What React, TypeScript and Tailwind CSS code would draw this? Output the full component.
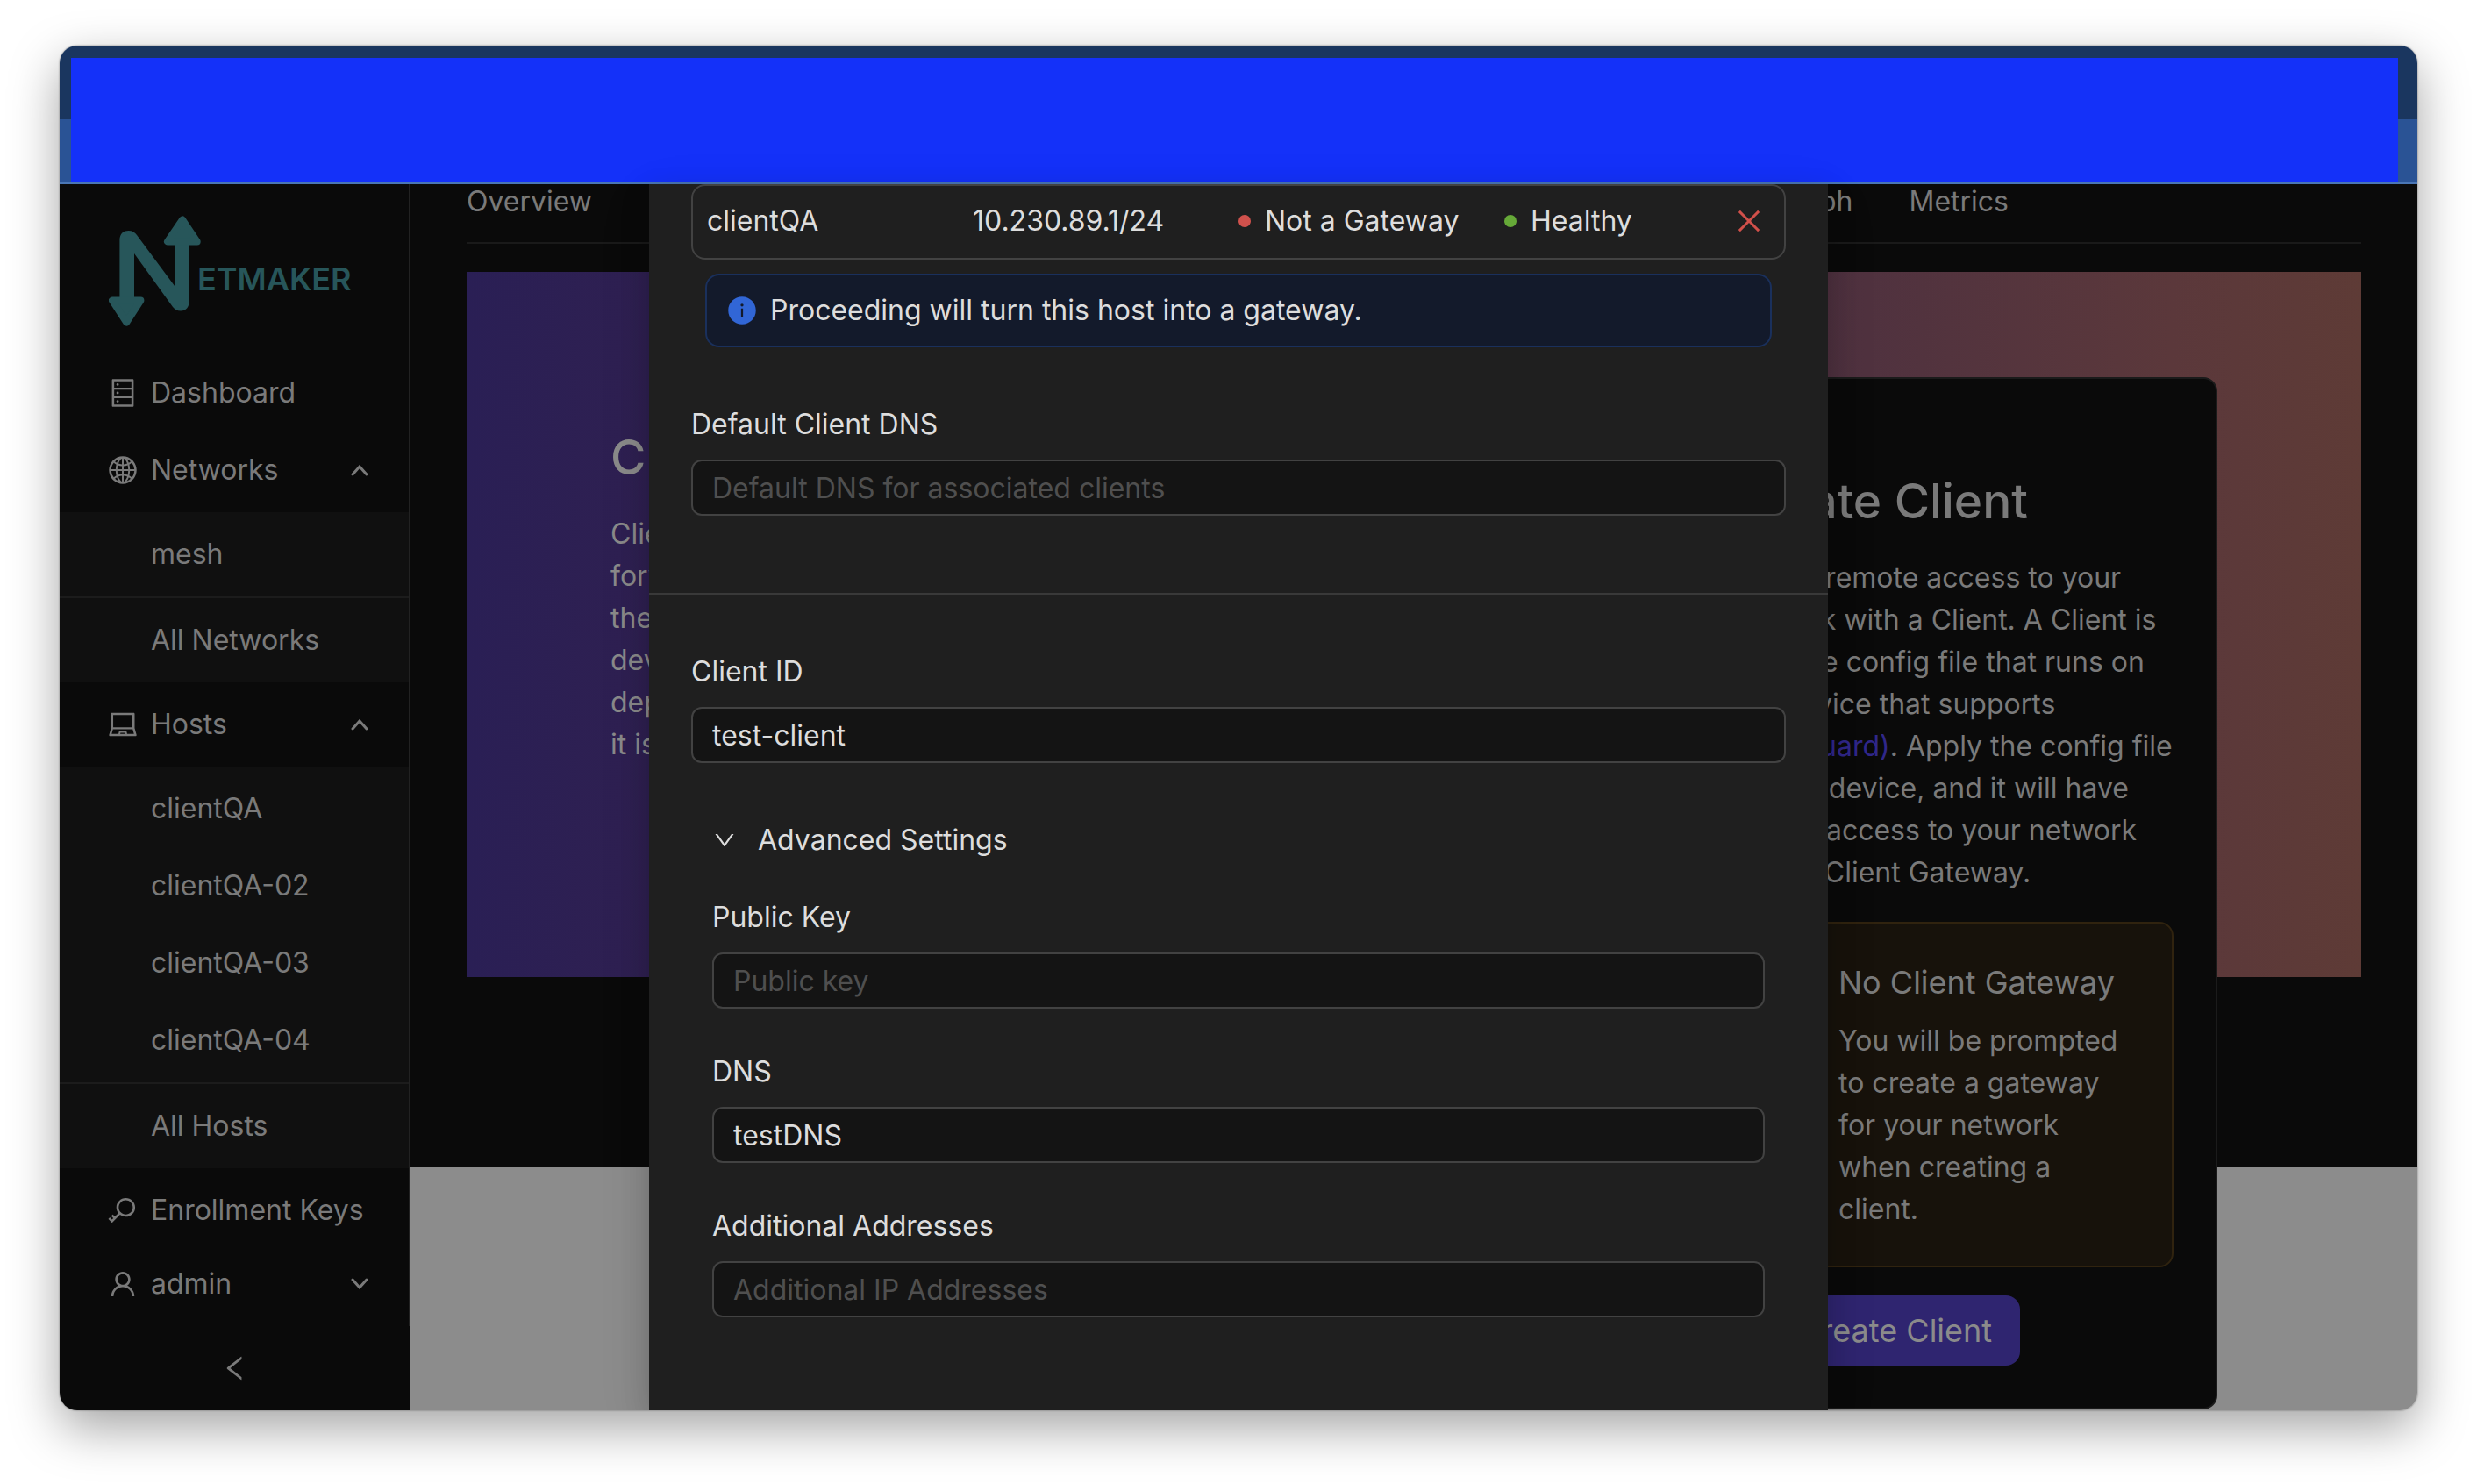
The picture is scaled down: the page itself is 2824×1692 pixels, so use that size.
import React from "react";
import type { ReactNode } from "react";
import {
  AiFillInfoCircle,
  AiOutlineClose,
  AiOutlineDatabase,
  AiOutlineDown,
  AiOutlineExclamationCircle,
  AiOutlineGlobal,
  AiOutlineKey,
  AiOutlineLaptop,
  AiOutlineLeft,
  AiOutlinePlus,
  AiOutlineUser,
} from "react-icons/ai";

function Logo() {
  return (
    <a href="#home" className="ml-14 mt-9 flex text-[#27565a]" aria-label="Netmaker">
      <svg viewBox="0 0 105 126" className="h-[126px] w-[105px] shrink-0" fill="currentColor">
        <path d="M12.4 94V28C12.4 20 17 17 22.5 17C27 17 30 19 32 22L75.8 81V31H91.8V97C91.8 104 88 108.5 82 108.5C78 108.5 75 106.5 73 104L29 43V94Z" />
        <g stroke="currentColor" strokeWidth="8" strokeLinejoin="round">
          <path d="M84 4.500L67 29.500H100.700Z" />
          <path d="M20.200 121.500L4 96.500H36.400Z" />
        </g>
      </svg>
      <span className="-ml-1 mt-12 text-[36px] font-semibold leading-[48px]">ETMAKER</span>
    </a>
  );
}

function Arrow({ up = false }: { up?: boolean }) {
  return (
    <svg viewBox="0 0 20 14" className="ml-auto h-[14px] w-5" fill="none" stroke="currentColor" strokeWidth="3" strokeLinecap="round">
      <path d={up ? "M2 12L10 3L18 12" : "M2 2L10 11L18 2"} />
    </svg>
  );
}

function NavItem({ icon, label, arrow }: { icon?: ReactNode; label: string; arrow?: "up" | "down" }) {
  return (
    <button type="button" className="flex h-20 w-full items-center gap-[14px] pl-[54px] pr-[46px] text-left">
      <span className="w-9 shrink-0 text-[36px]">{icon}</span>
      <span className="whitespace-nowrap">{label}</span>
      {arrow && <Arrow up={arrow === "up"} />}
    </button>
  );
}

function SubMenu({ items, all }: { items: string[]; all: string }) {
  return (
    <div className="bg-[#101010]">
      <div className="flex flex-col gap-2 border-b-2 border-[#1c1c1c] py-2">
        {items.map((item) => (
          <NavItem key={item} label={item} />
        ))}
      </div>
      <div className="py-2">
        <NavItem label={all} />
      </div>
    </div>
  );
}

function Sidebar() {
  return (
    <aside className="flex w-[400px] shrink-0 flex-col bg-[#0a0a0a] text-[#7a7a7a]">
      <div className="flex flex-1 flex-col border-r-2 border-[#222222] pb-2">
        <Logo />
        <nav className="mt-9 flex flex-1 flex-col justify-between">
          <div className="flex flex-col gap-2">
            <NavItem icon={<AiOutlineDatabase />} label="Dashboard" />
            <NavItem icon={<AiOutlineGlobal />} label="Networks" arrow="up" />
            <SubMenu items={["mesh"]} all="All Networks" />
            <NavItem icon={<AiOutlineLaptop />} label="Hosts" arrow="up" />
            <SubMenu items={["clientQA", "clientQA-02", "clientQA-03", "clientQA-04"]} all="All Hosts" />
            <NavItem icon={<AiOutlineKey />} label="Enrollment Keys" />
          </div>
          <NavItem icon={<AiOutlineUser />} label="admin" arrow="down" />
        </nav>
      </div>
      <button type="button" aria-label="Collapse sidebar" className="flex h-24 items-center justify-center text-[36px]">
        <AiOutlineLeft />
      </button>
    </aside>
  );
}

function Tabs() {
  return (
    <div className="flex h-[68px] justify-between border-b-2 border-[#1a1a1a] pr-[402px] leading-[40px]">
      <div className="flex items-start gap-16">
        <button type="button">Overview</button>
        <button type="button">Hosts</button>
      </div>
      <div className="flex items-start gap-16">
        <button type="button">Graph</button>
        <button type="button">Metrics</button>
      </div>
    </div>
  );
}

function CreateCard() {
  return (
    <div className="w-[608px] shrink-0 rounded-2xl border-2 border-[#1b1b1b] bg-[#0a0a0a] px-12 pb-12 pt-[103px] text-[#7a7a7a]">
      <h2 className="mb-7 text-[55px] font-medium leading-[72px]">Create Client</h2>
      <p className="whitespace-nowrap">
        Enable remote access to your
        <br />
        network with a Client. A Client is
        <br />
        a simple config file that runs on
        <br />
        any device that supports
        <br />
        <a href="#wireguard" className="text-[#30278a]">(WireGuard)</a>. Apply the config file
        <br />
        to your device, and it will have
        <br />
        secure access to your network
        <br />
        via the Client Gateway.
      </p>
      <div className="mt-8 flex gap-7 rounded-2xl border-2 border-[#30230f] bg-[#17120b] py-10 pl-12 pr-12">
        <AiOutlineExclamationCircle className="shrink-0 text-[48px] text-[#7a5a12]" />
        <div>
          <h3 className="mb-4 whitespace-nowrap text-[36px] leading-[54px]">No Client Gateway</h3>
          <p className="whitespace-nowrap">
            You will be prompted
            <br />
            to create a gateway
            <br />
            for your network
            <br />
            when creating a
            <br />
            client.
          </p>
        </div>
      </div>
      <button type="button" className="mt-8 flex h-20 items-center gap-3 rounded-2xl bg-[#2f2570] px-8 text-[36px] text-[#8b8b8b]">
        <AiOutlinePlus />
        Create Client
      </button>
    </div>
  );
}

function Main() {
  return (
    <main className="min-w-0 flex-1 bg-[#8c8c8c]">
      <div className="h-[1120px] bg-[#0a0a0a] px-16 text-[#7a7a7a]">
        <Tabs />
        <section className="mt-8 flex h-[804px] items-start justify-between bg-[linear-gradient(90deg,#2a1f55_0%,#2f2051_10%,#50323f_74%,#5b383b_90%,#5e3b36_100%)] px-[164px] pt-[120px]">
          <div className="mt-[55px] text-[#8a8a8a]">
            <h1 className="mb-7 text-[55px] font-medium leading-[72px]">Clients</h1>
            <p className="whitespace-nowrap">
              Clients allow for
              <br />
              forwarding traffic to
              <br />
              the network from
              <br />
              devices. You can
              <br />
              deploy it where
              <br />
              it is needed.
            </p>
          </div>
          <CreateCard />
        </section>
      </div>
    </main>
  );
}

type FieldProps = { id: string; label: string; placeholder?: string; value?: string };

function Field({ id, label, placeholder, value }: FieldProps) {
  return (
    <div className="flex flex-col gap-4">
      <label htmlFor={id}>{label}</label>
      <input
        id={id}
        type="text"
        placeholder={placeholder}
        defaultValue={value}
        className="h-16 w-full rounded-xl border-2 border-[#424242] bg-[#141414] px-[22px] outline-none placeholder:text-[#4f4f4f]"
      />
    </div>
  );
}

function Status({ color, label }: { color: string; label: string }) {
  return (
    <span className="flex items-center gap-4 whitespace-nowrap">
      <span className={`size-[14px] rounded-full ${color}`} />
      {label}
    </span>
  );
}

function ClientDialog() {
  return (
    <div
      role="dialog"
      aria-label="Create a client"
      className="absolute inset-y-0 left-1/2 w-1/2 -translate-x-1/2 bg-[#1f1f1f] text-[#dddddd] shadow-[0_12px_32px_rgba(0,0,0,0.16),0_18px_56px_rgba(0,0,0,0.1)]"
    >
      <div className="px-12">
        <div className="grid h-[86px] grid-cols-4 items-center rounded-2xl border-2 border-[#424242] px-4 pb-0.5">
          <span>clientQA</span>
          <span>10.230.89.1/24</span>
          <Status color="bg-[#d0514c]" label="Not a Gateway" />
          <span className="flex items-center justify-between pr-1.5">
            <Status color="bg-[#66a938]" label="Healthy" />
            <button type="button" aria-label="Remove gateway" className="text-[36px] text-[#d1504a]">
              <AiOutlineClose />
            </button>
          </span>
        </div>
        <div role="alert" className="mx-4 mt-4 flex h-[84px] items-center gap-[14px] rounded-2xl border-2 border-[#1a305c] bg-[#131a2b] px-[22px]">
          <AiFillInfoCircle className="text-[36px] text-[#3166d6]" />
          Proceeding will turn this host into a gateway.
        </div>
        <div className="mt-16">
          <Field id="default-dns" label="Default Client DNS" placeholder="Default DNS for associated clients" />
        </div>
      </div>
      <hr className="mt-[88px] border-t-2 border-[#393939]" />
      <div className="px-12 pt-16">
        <Field id="client-id" label="Client ID" value="test-client" />
        <div className="mt-16 px-6">
          <button type="button" aria-expanded="true" className="flex items-center gap-6">
            <AiOutlineDown className="text-[28px]" />
            Advanced Settings
          </button>
          <div className="mt-10 flex flex-col gap-12">
            <Field id="public-key" label="Public Key" placeholder="Public key" />
            <Field id="dns" label="DNS" value="testDNS" />
            <Field id="addresses" label="Additional Addresses" placeholder="Additional IP Addresses" />
          </div>
        </div>
      </div>
    </div>
  );
}

export default function App() {
  return (
    <div className="flex min-h-screen flex-col bg-white px-[68px] pb-[84px] pt-[52px] font-['Inter',sans-serif] text-[32px] leading-[48px]">
      <div className="flex flex-1 flex-col overflow-hidden rounded-[20px] shadow-[0_0_2px_rgba(0,0,0,0.5),0_20px_56px_rgba(0,0,0,0.36)]">
        <header className="h-[158px] shrink-0 border-b-2 border-[#4a76b5] bg-[linear-gradient(#1a365f_84px,#2a5395_84px)] pl-[13px] pr-[22px] pt-[14px]">
          <div className="h-full bg-[#1431f9]" />
        </header>
        <div className="relative flex flex-1">
          <Sidebar />
          <Main />
          <ClientDialog />
        </div>
      </div>
    </div>
  );
}
